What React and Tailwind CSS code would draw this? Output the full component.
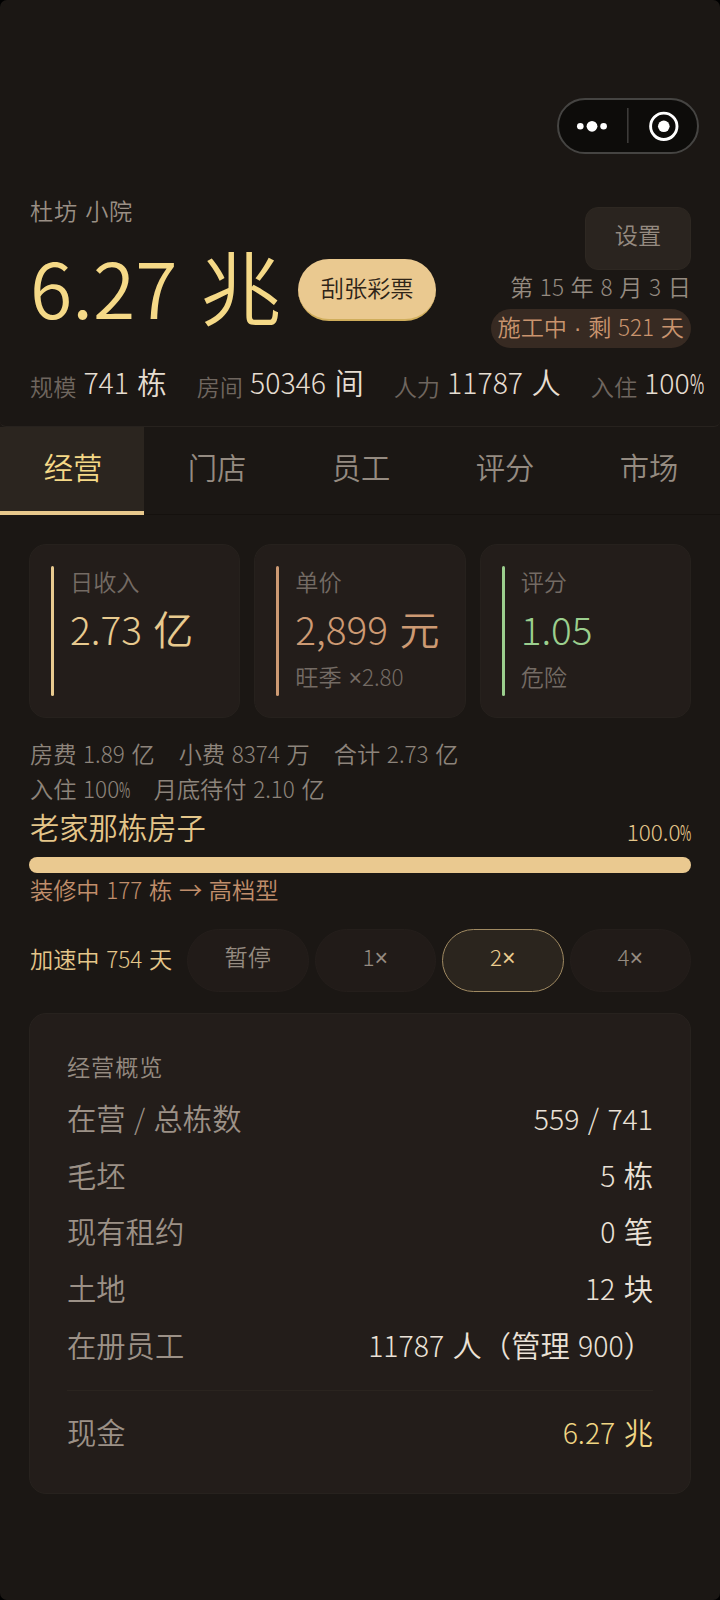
import React, { useState } from "react";
import clsx from "clsx";

const stats = [
  { label: "规模", value: "741 栋" },
  { label: "房间", value: "50346 间" },
  { label: "人力", value: "11787 人" },
  { label: "入住", value: "100%" },
];

const tabs = ["经营", "门店", "员工", "评分", "市场"];

const cards = [
  { label: "日收入", value: "2.73 亿", text: "text-[#e8ca8f]", bar: "bg-[#e8ca8f]" },
  { label: "单价", value: "2,899 元", note: "旺季 ×2.80", text: "text-[#cd9a73]", bar: "bg-[#cd9a73]" },
  { label: "评分", value: "1.05", note: "危险", text: "text-[#9bcf8e]", bar: "bg-[#9bcf8e]" },
];

const speeds = ["暂停", "1×", "2×", "4×"];

const rows = [
  { label: "在营 / 总栋数", value: "559 / 741" },
  { label: "毛坯", value: "5 栋" },
  { label: "现有租约", value: "0 笔" },
  { label: "土地", value: "12 块" },
  { label: "在册员工", value: "11787 人（管理 900）" },
];

// numbers are set a little smaller and lighter than the chinese text, the percent sign is narrow
function Txt({ children, big }) {
  return children.split(/([\d.,/]+|%|→)/).map((part, i) => {
    if (part === "%") {
      return (
        <span key={i} className="inline-block w-[0.48em] origin-left scale-x-[0.56] font-['Noto_Sans_CJK_SC',sans-serif] text-[0.945em] leading-none">%</span>
      );
    }
    if (part === "→") {
      return <span key={i} className="font-['Noto_Sans_CJK_SC',sans-serif] leading-none">→</span>;
    }
    if (/^[\d.,/]+$/.test(part)) {
      return (
        <span
          key={i}
          className={clsx("font-['Noto_Sans_CJK_SC',sans-serif] leading-none", big ? "text-[0.95em]" : "text-[0.97em] font-light")}
        >
          {part}
        </span>
      );
    }
    return <span key={i}>{part}</span>;
  });
}

function Capsule() {
  return (
    <div className="flex h-14 w-[142px] items-center rounded-full border-2 border-[#454442] bg-[#0d0c0a]">
      <svg viewBox="0 0 138 52" className="h-[52px] w-[138px]">
        <circle cx="21.3" cy="26.3" r="3.3" fill="#fff" />
        <circle cx="33" cy="26.3" r="5.4" fill="#fff" />
        <circle cx="44.6" cy="26.3" r="3.3" fill="#fff" />
        <rect x="68" y="8" width="1.6" height="35" fill="#3c3b39" />
        <circle cx="104.8" cy="26.3" r="13.2" fill="none" stroke="#fff" strokeWidth="2.9" />
        <circle cx="104.8" cy="26.3" r="5.8" fill="#fff" />
      </svg>
    </div>
  );
}

function Card({ card }) {
  return (
    <div className="flex h-[174px] flex-1 gap-4 rounded-[17px] border border-[#26211d] bg-[#231d1a] px-[21px] py-[21px]">
      <div className={clsx("h-[130px] w-[3px] shrink-0 rounded-full", card.bar)} />
      <div className="flex flex-col whitespace-nowrap">
        <div className="h-8 pt-px text-[23.2px] leading-8 text-[#746b64]">{card.label}</div>
        <div className={clsx("h-[64px] text-[40px] leading-[66px]", card.text)}>
          <Txt>{card.value}</Txt>
        </div>
        {card.note && (
          <div className="h-8 text-[23.2px] leading-8 text-[#746b64]"><Txt>{card.note}</Txt></div>
        )}
      </div>
    </div>
  );
}

export default function App() {
  const [tab, setTab] = useState(0);
  const [speed, setSpeed] = useState(2);

  return (
    <div className="bg-black">
      <div className="h-[1600px] w-[720px] overflow-hidden rounded-[7px] bg-[#1b1714] font-['Liberation_Sans','Noto_Sans_CJK_SC',sans-serif] text-[23.2px] font-[350] text-[#958b81] [word-spacing:0.01em]">
        <div className="flex h-[154px] items-end justify-end pr-[21px]">
          <Capsule />
        </div>

        <header className="h-[273px] rounded-b-[6px] border-b border-[#27221e] px-[29px] pt-[40px]">
          <div className="flex h-[160px] justify-between">
            <div className="pl-px">
              <div className="h-[34px] pt-px leading-[34px] tracking-[0.03em] text-[#9a8f85]">杜坊 小院</div>
              <div className="flex h-[124px] items-center gap-[17px] whitespace-nowrap">
                <div className="text-[81px] leading-none text-[#f5d987]"><Txt big>6.27 兆</Txt></div>
                <button className="h-[62px] w-[138px] rounded-full border-b-2 border-[#d0ae5c] bg-[#eac990] font-[350] text-[#2e2417]">
                  刮张彩票
                </button>
              </div>
            </div>
            <div className="flex flex-col items-end whitespace-nowrap pt-[13px]">
              <button className="h-[63px] w-[106px] rounded-[13px] border border-[#2e2822] bg-[#2a241f] pb-1 font-[350]">设置</button>
              <div className="h-[39px] leading-[37px]"><Txt>第 15 年 8 月 3 日</Txt></div>
              <div className="h-[39px] rounded-full bg-[#372a22] px-[7px] leading-[38px] text-[#c9946e]">
                <Txt>施工中 · 剩 521 天</Txt>
              </div>
            </div>
          </div>
          <div className="flex gap-[30px] whitespace-nowrap pl-px pt-[12px]">
            {stats.map((s) => (
              <div key={s.label} className="flex items-end gap-[7px]">
                <span className="leading-[27px] text-[#6f665f]">{s.label}</span>
                <span className="text-[29.3px] leading-[36px] text-[#e6ddd1]"><Txt>{s.value}</Txt></span>
              </div>
            ))}
          </div>
        </header>

        <nav className="flex h-[88px] border-b border-[#15110e]">
          {tabs.map((name, i) => (
            <button
              key={name}
              onClick={() => setTab(i)}
              className={clsx(
                "h-[88px] flex-1 border-b-4 pl-0.5 text-[29.3px] font-[350]",
                i === tab ? "border-[#e8c88c] bg-[#2b251f] text-[#f5d987]" : "border-transparent"
              )}
            >
              {name}
            </button>
          ))}
        </nav>

        <main className="px-[29px] pt-[29px]">
          <div className="flex gap-[14px]">
            {cards.map((card, i) => <Card key={i} card={card} />)}
          </div>

          <div className="mt-5 pl-px text-[#8d847b] leading-[35px]">
            <div className="flex gap-[24px]">
              <span><Txt>房费 1.89 亿</Txt></span>
              <span><Txt>小费 8374 万</Txt></span>
              <span><Txt>合计 2.73 亿</Txt></span>
            </div>
            <div className="flex gap-[24px]">
              <span><Txt>入住 100%</Txt></span>
              <span><Txt>月底待付 2.10 亿</Txt></span>
            </div>
          </div>

          <div className="flex h-[49px] justify-between pl-px text-[#e4c68a]">
            <span className="text-[29.3px] leading-[42px]">老家那栋房子</span>
            <span className="leading-[50px]"><Txt>100.0%</Txt></span>
          </div>
          <div className="h-4 rounded-full bg-[#eac990]" />
          <div className="h-[56px] pl-px leading-[36px] text-[#c08e6b]"><Txt>装修中 177 栋 → 高档型</Txt></div>

          <div className="flex h-[63px] items-center gap-[6px]">
            <div className="w-[152px] whitespace-nowrap pl-px text-[#e4c68a]"><Txt>加速中 754 天</Txt></div>
            {speeds.map((s, i) => (
              <button
                key={s}
                onClick={() => setSpeed(i)}
                className={clsx(
                  "h-[63px] flex-1 rounded-full border pb-1 font-[350]",
                  i === speed ? "border-[#a08a62] bg-[#2b251e] text-[#eccd8f]" : "border-[#241e1b] bg-[#211b18]"
                )}
              >
                <Txt>{s}</Txt>
              </button>
            ))}
          </div>

          <section className="mt-[21px] h-[481px] rounded-[17px] border border-[#27221e] bg-[#231d1a] px-[37px] pt-[35px]">
            <h2 className="h-[43px] pt-px leading-[36px] tracking-[0.04em]">经营概览</h2>
            {rows.map((row) => (
              <div key={row.label} className="flex h-[56.7px] justify-between text-[29.3px] leading-[56.7px]">
                <span className="text-[#9c9187]"><Txt>{row.label}</Txt></span>
                <span className="text-[#ebe2d7]"><Txt>{row.value}</Txt></span>
              </div>
            ))}
            <div className="mt-[15px] flex justify-between border-t border-[#2a241f] pt-[15px] text-[29.3px] leading-[56px]">
              <span className="text-[#9c9187]">现金</span>
              <span className="text-[#f0d684]"><Txt>6.27 兆</Txt></span>
            </div>
          </section>
        </main>
      </div>
    </div>
  );
}
